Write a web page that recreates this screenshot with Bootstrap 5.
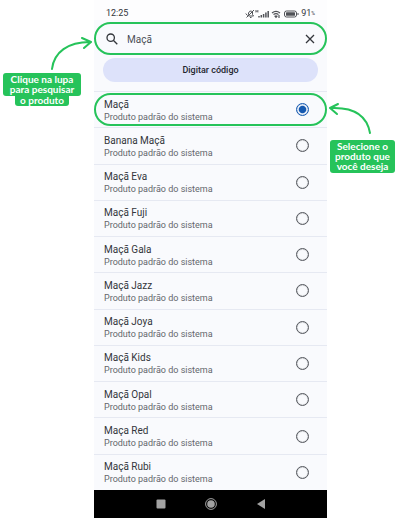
<!DOCTYPE html>
<html lang="pt-BR">
<head>
<meta charset="utf-8">
<meta name="viewport" content="width=device-width, initial-scale=1">
<title>Selecionar produto</title>
<link href="https://cdn.jsdelivr.net/npm/bootstrap@5.3.0/dist/css/bootstrap.min.css" rel="stylesheet">
<style>
  :root { --guide: #26c35a; --ink: #33363b; }
  body { font-family: Roboto, sans-serif; font-size: 10px; line-height: 13px; color: var(--ink); background: #fff; }
  .tutorial { display: grid; grid-template-columns: 94px minmax(0, 1fr) 73px; }
  .phone { background: #f9fafd; }
  .status-bar { height: 20px; padding: 7px 12px 0; background: #fdfdfe; }
  .status-bar svg { display: block; margin-right: 2px; }
  .percent { font-size: 5px; }
  .clock { font-size: 9px; }
  .search-box { height: 33px; margin-top: 2px; padding: 0 10px; gap: 9px; border: 2px solid var(--guide); border-radius: 17px; }
  .search-box .form-control { padding: 2px 0 0; font-size: 10px; line-height: 13px; color: #4c4f55; box-shadow: none; }
  .plain-btn { border: 0; padding: 0; background: none; line-height: 0; color: inherit; }
  .code-btn { height: 24px; margin: 3px 9px 9px; border-radius: 12px; background: #dde2fa; color: #23262e; font-size: 9px; line-height: 12px; }
  .code-btn:hover { background: #d0d7f6; }
  .product { position: relative; min-height: 36px; padding: 0 18px 0 10px; border-top: 1px solid #e6e9f2; cursor: pointer; }
  .product-text { padding-top: 2px; }
  .product-name { font-size: 10px; line-height: 13px; }
  .product-kind { font-size: 9px; line-height: 13px; color: #64676c; }
  .product .form-check-input { width: 13px; height: 13px; margin: 0; --c: #55585e; border: 1px solid var(--c);
    background: transparent; box-shadow: inset 0 0 1px var(--c); }
  .product .form-check-input:checked { --c: #1559b0;
    background: radial-gradient(closest-side, var(--c) 50%, transparent 66%) border-box; }
  .picked::after { content: ""; position: absolute; inset: 1px 0; border: 2px solid var(--guide); border-radius: 17px; pointer-events: none; }
  .system-nav { height: 28px; gap: 38px; background: #000; color: #a3a3a3; }
  .guide-left { padding-top: 37px; }
  .guide-right { padding-top: 102px; }
  .arrow { fill: none; stroke: var(--guide); stroke-width: 2; stroke-linecap: round; stroke-linejoin: round; }
  .note { font-family: Lato, sans-serif; font-size: 10px; line-height: 10px; font-weight: 700; color: #fff; text-align: center; white-space: nowrap; }
  .note span { background: var(--guide); border-radius: 3px; }
  .note-left { width: 78px; margin: 2px 0 0 3px; }
  .note-left span { padding: 1px 5px 2px; }
  .note-left .note-tail { padding: 0 5px 1px; margin-top: -1px; border-radius: 0 0 3px 3px; }
  .note-right { width: 65px; margin: 4px 0 0 3px; }
  .note-right span { padding: 1px 0 2px; }
</style>
</head>
<body>
<div class="tutorial min-vh-100">
  <aside class="guide-left d-flex flex-column">
    <svg class="arrow align-self-end" width="44" height="34" viewBox="0 0 44 34" aria-hidden="true"><path d="M2 32C4 15 18 5 40 5M32 1L41 5L34 11"/></svg>
    <div class="note note-left d-flex flex-column align-items-center">
      <span class="w-100">Clique na lupa<br>para pesquisar</span>
      <span class="note-tail">o produto</span>
    </div>
  </aside>

  <main class="phone d-flex flex-column">
    <div class="status-bar d-flex justify-content-between">
      <span class="clock">12:25</span>
      <div class="d-flex align-items-center">
        <svg width="54" height="10" viewBox="0 0 54 10" fill="none" stroke="#505257" aria-label="Sinal e bateria">
          <path d="M2.500 7L3.500 5.500V4Q4.500 1.500 6.500 2L7.500 3V5.500L8.500 7H3.500M5 8.500H6.500M1.500 8.500L9 1M.8 4.500L2 6"/>
          <path stroke-width=".8" d="M10.900 1V3.500M12.900 1V3.500M10.900 2.200H12.900"/>
          <path stroke-width="1.500" d="M14 8.500V7M16.300 8.500V6M18.600 8.500V5M20.900 8.500V3.500M23.200 8.500V2"/>
          <path stroke-width="1.200" d="M27 4Q31 .8 35 4M28.500 5.600Q31 3.700 33.500 5.600M30 7.200Q31 6.500 32 7.200L31 8.300ZM34 6V9"/>
          <rect x="39.500" y="2" width="12" height="6" rx="2"/><rect x="41" y="3.200" width="9" height="3.600" rx=".6" fill="#505257" stroke="none"/><path d="M53 4V6"/>
        </svg>
        <span class="clock">91</span><span class="percent">%</span>
      </div>
    </div>

    <form class="search-box d-flex align-items-center" role="search">
      <button class="plain-btn" type="button" aria-label="Pesquisar">
        <svg width="12" height="12" viewBox="0 0 12 12" fill="none" stroke="currentColor" stroke-width="1.300"><circle cx="4.700" cy="4.700" r="3.700"/><path d="M7.300 7.300L11.300 11.300"/></svg>
      </button>
      <input class="form-control border-0 bg-transparent" type="text" value="Maçã" aria-label="Produto">
      <button class="plain-btn" type="button" aria-label="Limpar">
        <svg width="10" height="10" viewBox="0 0 10 10" stroke="currentColor" stroke-width="1.300"><path d="M1 1L9 9M9 1L1 9"/></svg>
      </button>
    </form>
    <button class="code-btn btn fw-medium border-0 p-0" type="button">Digitar código</button>

    <div class="flex-fill d-flex flex-column" role="radiogroup" aria-label="Produtos">
      <label class="product picked flex-fill d-flex align-items-center justify-content-between"><span class="product-text"><span class="product-name d-block">Maçã</span><span class="product-kind d-block">Produto padrão do sistema</span></span><input class="form-check-input" type="radio" name="produto" checked></label>
      <label class="product flex-fill d-flex align-items-center justify-content-between"><span class="product-text"><span class="product-name d-block">Banana Maçã</span><span class="product-kind d-block">Produto padrão do sistema</span></span><input class="form-check-input" type="radio" name="produto"></label>
      <label class="product flex-fill d-flex align-items-center justify-content-between"><span class="product-text"><span class="product-name d-block">Maçã Eva</span><span class="product-kind d-block">Produto padrão do sistema</span></span><input class="form-check-input" type="radio" name="produto"></label>
      <label class="product flex-fill d-flex align-items-center justify-content-between"><span class="product-text"><span class="product-name d-block">Maçã Fuji</span><span class="product-kind d-block">Produto padrão do sistema</span></span><input class="form-check-input" type="radio" name="produto"></label>
      <label class="product flex-fill d-flex align-items-center justify-content-between"><span class="product-text"><span class="product-name d-block">Maçã Gala</span><span class="product-kind d-block">Produto padrão do sistema</span></span><input class="form-check-input" type="radio" name="produto"></label>
      <label class="product flex-fill d-flex align-items-center justify-content-between"><span class="product-text"><span class="product-name d-block">Maçã Jazz</span><span class="product-kind d-block">Produto padrão do sistema</span></span><input class="form-check-input" type="radio" name="produto"></label>
      <label class="product flex-fill d-flex align-items-center justify-content-between"><span class="product-text"><span class="product-name d-block">Maçã Joya</span><span class="product-kind d-block">Produto padrão do sistema</span></span><input class="form-check-input" type="radio" name="produto"></label>
      <label class="product flex-fill d-flex align-items-center justify-content-between"><span class="product-text"><span class="product-name d-block">Maçã Kids</span><span class="product-kind d-block">Produto padrão do sistema</span></span><input class="form-check-input" type="radio" name="produto"></label>
      <label class="product flex-fill d-flex align-items-center justify-content-between"><span class="product-text"><span class="product-name d-block">Maçã Opal</span><span class="product-kind d-block">Produto padrão do sistema</span></span><input class="form-check-input" type="radio" name="produto"></label>
      <label class="product flex-fill d-flex align-items-center justify-content-between"><span class="product-text"><span class="product-name d-block">Maça Red</span><span class="product-kind d-block">Produto padrão do sistema</span></span><input class="form-check-input" type="radio" name="produto"></label>
      <label class="product flex-fill d-flex align-items-center justify-content-between"><span class="product-text"><span class="product-name d-block">Maçã Rubi</span><span class="product-kind d-block">Produto padrão do sistema</span></span><input class="form-check-input" type="radio" name="produto"></label>
    </div>

    <nav class="system-nav d-flex justify-content-center align-items-center" aria-label="Sistema">
      <button class="plain-btn" type="button" aria-label="Recentes"><svg width="12" height="12" viewBox="0 0 12 12" fill="currentColor"><rect x="1.500" y="1.500" width="9" height="9" rx="1"/></svg></button>
      <button class="plain-btn" type="button" aria-label="Início"><svg width="12" height="12" viewBox="0 0 12 12" fill="currentColor"><circle cx="6" cy="6" r="5.400" fill="none" stroke="currentColor"/><circle cx="6" cy="6" r="3.800"/></svg></button>
      <button class="plain-btn" type="button" aria-label="Voltar"><svg width="12" height="12" viewBox="0 0 12 12" fill="currentColor"><path d="M10 1V11L2 6Z"/></svg></button>
    </nav>
  </main>

  <aside class="guide-right d-flex flex-column">
    <svg class="arrow align-self-start" width="46" height="34" viewBox="0 0 46 34" aria-hidden="true"><path d="M43 31C40 14 27 5 4 6M11 2L3 6L10 12"/></svg>
    <div class="note note-right d-flex flex-column">
      <span>Selecione o<br>produto que<br>você deseja</span>
    </div>
  </aside>
</div>
<script src="https://cdn.jsdelivr.net/npm/bootstrap@5.3.0/dist/js/bootstrap.bundle.min.js"></script>
</body>
</html>
